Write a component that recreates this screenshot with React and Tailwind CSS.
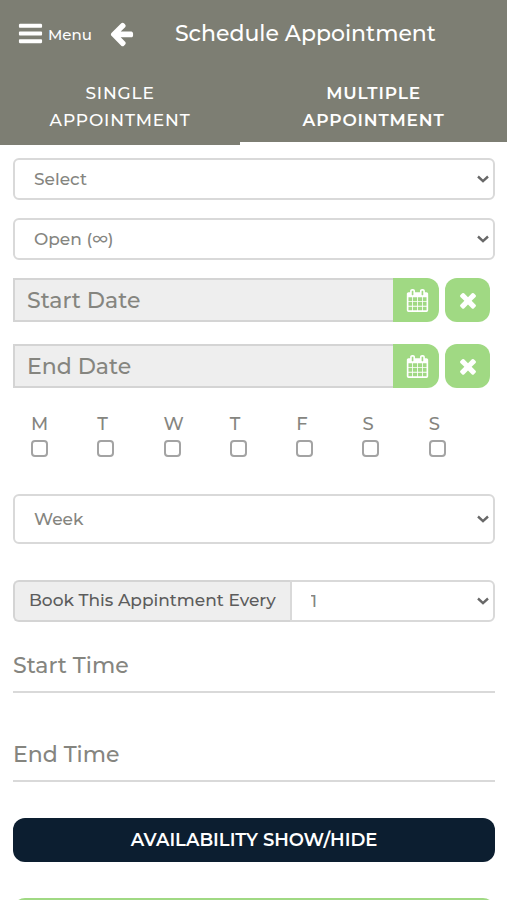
import { useState } from 'react';

const icons = {
  bars: 'M1664 1344v128q0 26-19 45t-45 19h-1408q-26 0-45-19t-19-45v-128q0-26 19-45t45-19h1408q26 0 45 19t19 45zm0-512v128q0 26-19 45t-45 19h-1408q-26 0-45-19t-19-45v-128q0-26 19-45t45-19h1408q26 0 45 19t19 45zm0-512v128q0 26-19 45t-45 19h-1408q-26 0-45-19t-19-45v-128q0-26 19-45t45-19h1408q26 0 45 19t19 45z',
  back: 'M1664 896v128q0 53-32.5 90.5t-84.5 37.5h-704l293 294q38 36 38 90t-38 90l-75 76q-37 37-90 37-52 0-91-37l-651-652q-37-37-37-90 0-52 37-91l651-650q38-38 91-38 52 0 90 38l75 74q38 38 38 91t-38 91l-293 293h704q52 0 84.5 37.5t32.5 90.5z',
  times:
    'M1490 1322q0 40-28 68l-136 136q-28 28-68 28t-68-28l-294-294-294 294q-28 28-68 28t-68-28l-136-136q-28-28-28-68t28-68l294-294-294-294q-28-28-28-68t28-68l136-136q28-28 68-28t68 28l294 294 294-294q28-28 68-28t68 28l136 136q28 28 28 68t-28 68l-294 294 294 294q28 28 28 68z',
  calendar:
    'M192 1664h288v-288h-288v288zm352 0h320v-288h-320v288zm-352-352h288v-320h-288v320zm352 0h320v-320h-320v320zm-352-384h288v-288h-288v288zm736 736h320v-288h-320v288zm-384-736h320v-288h-320v288zm768 736h288v-288h-288v288zm-384-352h320v-320h-320v320zm-352-864v-288q0-13-9.5-22.5t-22.5-9.5h-64q-13 0-22.5 9.5t-9.5 22.5v288q0 13 9.5 22.5t22.5 9.5h64q13 0 22.5-9.5t9.5-22.5zm736 864h288v-320h-288v320zm-384-384h320v-288h-320v288zm384 0h288v-288h-288v288zm32-480v-288q0-13-9.5-22.5t-22.5-9.5h-64q-13 0-22.5 9.5t-9.5 22.5v288q0 13 9.5 22.5t22.5 9.5h64q13 0 22.5-9.5t9.5-22.5zm384-64v1280q0 52-38 90t-90 38h-1408q-52 0-90-38t-38-90v-1280q0-52 38-90t90-38h128v-96q0-66 47-113t113-47h64q66 0 113 47t47 113v96h384v-96q0-66 47-113t113-47h64q66 0 113 47t47 113v96h128q52 0 90 38t38 90z'
};

const Icon = ({ name, className }) => (
  <svg viewBox="0 0 1792 1792" fill="currentColor" aria-hidden="true" className={className}>
    <path d={icons[name]} />
  </svg>
);

// Dropdown with its own arrow
const SelectField = ({ id, label, options, className }) => (
  <div className="relative flex-1">
    <select
      id={id}
      aria-label={label}
      className={`block w-full appearance-none border-2 border-[#d9d9d9] bg-white pl-[19px] pr-8 pt-[2px] text-[17px] font-medium text-[#85857f] ${className}`}
    >
      {options.map(option => (
        <option key={option}>{option}</option>
      ))}
    </select>
    <svg
      viewBox="0 0 12 8"
      fill="none"
      stroke="#686868"
      strokeWidth="2.4"
      aria-hidden="true"
      className="pointer-events-none absolute right-[6px] top-1/2 h-2 w-3 -translate-y-1/2"
    >
      <path d="M1 1.5l5 4.6 5-4.6" />
    </svg>
  </div>
);

const DateField = ({ label }) => (
  <div className="flex h-11 pr-[5px]">
    <input
      type="text"
      readOnly
      aria-label={label}
      placeholder={label}
      className="min-w-0 flex-1 border-y-2 border-l-2 border-[#d4d4d4] bg-[#eeeeee] px-3 text-[22px] font-medium placeholder:text-[#85857f]"
    />
    <button
      aria-label={`Pick ${label}`}
      className="flex w-[46px] items-center justify-center rounded-r-xl bg-[#a0d983] pl-[2px] text-white"
    >
      <Icon name="calendar" className="h-[23px] w-[23px]" />
    </button>
    <button
      aria-label={`Clear ${label}`}
      className="ml-[6px] flex w-[45px] items-center justify-center rounded-xl bg-[#a0d983] text-white"
    >
      <Icon name="times" className="h-6 w-6" />
    </button>
  </div>
);

const TimeField = ({ label }) => (
  <input
    type="text"
    aria-label={label}
    placeholder={label}
    className="block h-[54px] w-full border-b-2 border-[#d9d9d9] text-[22px] font-medium placeholder:text-[#85857f]"
  />
);

const App = () => {
  const [days, setDays] = useState([]);
  const [tab, setTab] = useState('Multiple');

  const weekdays = [
    { name: 'Monday', letter: 'M' },
    { name: 'Tuesday', letter: 'T' },
    { name: 'Wednesday', letter: 'W' },
    { name: 'Thursday', letter: 'T' },
    { name: 'Friday', letter: 'F' },
    { name: 'Saturday', letter: 'S' },
    { name: 'Sunday', letter: 'S' }
  ];

  // Toggle a weekday
  const handleDay = name => {
    setDays(days.includes(name) ? days.filter(d => d !== name) : [...days, name]);
  };

  return (
    <div className="h-screen overflow-hidden bg-white font-['Montserrat','Inter',sans-serif] font-medium text-[#85857f]">
      <header className="bg-[#7d7e73] text-white">
        <div className="flex h-[66px] items-center pl-[17px]">
          <button className="flex items-center gap-1 text-[15px]">
            <Icon name="bars" className="h-[27px] w-[27px]" />
            <span className="pt-1">Menu</span>
          </button>
          <button aria-label="Back" className="ml-4">
            <Icon name="back" className="h-[27px] w-[27px]" />
          </button>
          <h1 className="ml-10 whitespace-nowrap text-[22px] font-medium">Schedule Appointment</h1>
        </div>
        <div role="tablist" className="grid grid-cols-[9fr_10fr]">
          {['Single', 'Multiple'].map(name => (
            <button
              key={name}
              role="tab"
              aria-selected={tab === name}
              onClick={() => setTab(name)}
              className={`border-b-3 px-12 pb-2 pt-[14px] text-[17px] leading-[27px] tracking-wider uppercase ${
                tab === name ? 'border-white font-semibold' : 'border-[#7d7e73]'
              }`}
            >
              {name} Appointment
            </button>
          ))}
        </div>
      </header>

      <main className="flex flex-col pl-[13px] pr-3 pt-[13px]">
        <div className="flex flex-col gap-[18px]">
          <SelectField id="service" label="Service" options={['Select']} className="h-[42px] rounded-md" />
          <SelectField id="slots" label="Slots" options={['Open (∞)']} className="h-[42px] rounded-md" />
        </div>
        <div className="mt-[18px] flex flex-col gap-[22px]">
          <DateField label="Start Date" />
          <DateField label="End Date" />
        </div>

        {/* Weekdays */}
        <div className="mt-6 grid grid-cols-7 pl-[18px]">
          {weekdays.map(({ name, letter }) => (
            <label key={name} className="flex flex-col text-[18px] leading-6">
              {letter}
              <input
                type="checkbox"
                aria-label={name}
                checked={days.includes(name)}
                onChange={() => handleDay(name)}
                className="mt-1 h-[17px] w-[17px] appearance-none rounded-[4px] border-2 border-[#a3a3a3] bg-white checked:bg-[#7d7e73]"
              />
            </label>
          ))}
        </div>

        <div className="mt-[37px]">
          <SelectField id="period" label="Period" options={['Week', 'Month']} className="h-[50px] rounded-md" />
        </div>

        <div className="mt-9 flex h-[42px]">
          <label
            htmlFor="every"
            className="flex items-center whitespace-nowrap rounded-l-md border-y-2 border-l-2 border-[#d4d4d4] bg-[#eeeeee] px-[14px] text-[17px] text-[#5c5c5c]"
          >
            Book This Appintment Every
          </label>
          <SelectField id="every" options={['1', '2', '3', '4']} className="h-[42px] rounded-r-md" />
        </div>

        <div className="mt-[17px] flex flex-col gap-[35px]">
          <TimeField label="Start Time" />
          <TimeField label="End Time" />
        </div>

        <button className="mt-9 h-11 rounded-xl bg-[#0c1e30] text-[18px] font-semibold text-white uppercase">
          Availability Show/Hide
        </button>
        <button aria-label="Book" className="mt-9 h-11 rounded-xl bg-[#a0d983]" />
      </main>
    </div>
  );
};

export default App;
